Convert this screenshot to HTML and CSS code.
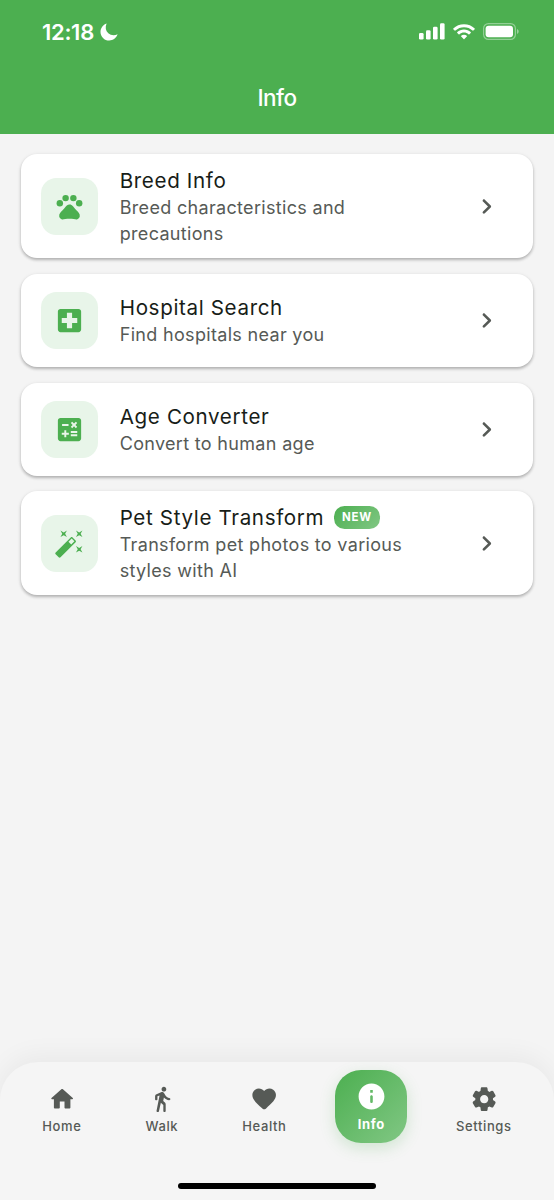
FILE: index.html
```html
<!DOCTYPE html>
<html lang="en">
<head>
<meta charset="utf-8">
<title>Info</title>
<link rel="stylesheet" href="styles.css">
</head>
<body>
<div class="screen">
  <header class="header">
    <div class="status">
      <div class="status-left">
        <span class="time">12:18</span>
        <svg class="moon" viewBox="0 0 18 18"><path d="M6.6.4C5 4.200 5.600 7.800 8.300 10.200c2.500 2.200 6 2.500 9.300 1.100C16.400 15 13.100 17.500 9.200 17.500 4.400 17.500.5 13.700.5 8.900.5 5 3 1.600 6.600.4z"/></svg>
      </div>
      <div class="status-right">
        <svg class="signal" viewBox="0 0 26 17"><rect x="0" y="10" width="4.600" height="6.500" rx="1.300"/><rect x="7" y="7.200" width="4.600" height="9.300" rx="1.300"/><rect x="14" y="3.800" width="4.600" height="12.700" rx="1.300"/><rect x="21" y="0.300" width="4.600" height="16.200" rx="1.300"/></svg>
        <svg class="wifi" viewBox="0 0 22 16"><path d="M11 .2C6.900.2 3.100 1.800.3 4.400c-.3.300-.3.600 0 .9l1.300 1.300c.2.200.6.200.9 0C4.800 4.500 7.700 3.300 11 3.300s6.200 1.200 8.500 3.300c.3.200.7.200.9 0l1.300-1.300c.3-.3.300-.6 0-.9C18.900 1.800 15.100.2 11 .2z"/><path d="M11 5.500c-2.600 0-4.900 1-6.700 2.600-.3.300-.3.600 0 .9l1.300 1.300c.3.300.6.300.9 0C7.700 9.200 9.300 8.600 11 8.600s3.300.6 4.500 1.700c.3.300.6.300.9 0L17.700 9c.3-.3.300-.6 0-.9-1.800-1.600-4.100-2.600-6.700-2.600z"/><path d="M11 10.700c-1.100 0-2.100.4-2.800 1-.3.300-.3.600 0 .9l2.400 2.500c.2.300.6.300.8 0l2.400-2.500c.3-.3.300-.6 0-.9-.7-.6-1.700-1-2.800-1z"/></svg>
        <svg class="battery" viewBox="0 0 36 17"><rect x=".6" y=".6" width="31.800" height="15.800" rx="4.800" fill="none" stroke="#fff" stroke-opacity=".4" stroke-width="1.200"/><rect x="2.600" y="2.700" width="27.400" height="11.600" rx="3"/><path d="M34 6v5c1-.4 1.700-1.400 1.700-2.500S35 6.400 34 6z" fill-opacity=".45"/></svg>
      </div>
    </div>
    <h1 class="title">Info</h1>
  </header>

  <main class="list">
    <a class="card tall">
      <span class="tile"><svg class="icon" viewBox="0 0 24 24"><circle cx="4.500" cy="9.500" r="2.500"/><circle cx="9" cy="5.500" r="2.500"/><circle cx="15" cy="5.500" r="2.500"/><circle cx="19.500" cy="9.500" r="2.500"/><path d="M17.34 14.86c-.87-1.02-1.6-1.89-2.48-2.91-.46-.54-1.05-1.08-1.75-1.32-.11-.04-.22-.07-.33-.09-.25-.04-.52-.04-.78-.04s-.53 0-.79.05c-.11.02-.22.05-.33.09-.7.24-1.28.78-1.75 1.32-.87 1.02-1.6 1.89-2.48 2.91-1.31 1.31-2.92 2.76-2.62 4.79.29 1.02 1.02 2.03 2.33 2.32.73.15 3.06-.44 5.54-.44h.18c2.48 0 4.81.58 5.54.44 1.31-.29 2.04-1.31 2.33-2.32.31-2.04-1.3-3.49-2.61-4.8z"/></svg></span>
      <span class="copy"><span class="name">Breed Info</span><span class="desc">Breed characteristics and precautions</span></span>
      <svg class="chevron" viewBox="0 0 24 24"><path d="M9.290 6.710c-.39.39-.39 1.020 0 1.410L13.170 12l-3.880 3.880c-.39.39-.39 1.020 0 1.410.39.39 1.020.39 1.410 0l4.590-4.590c.39-.39.39-1.020 0-1.410L10.700 6.700c-.38-.38-1.020-.38-1.410.01z"/></svg>
    </a>
    <a class="card">
      <span class="tile"><svg class="icon" viewBox="0 0 24 24"><path d="M19 3H5c-1.100 0-2 .9-2 2v14c0 1.100.9 2 2 2h14c1.100 0 2-.9 2-2V5c0-1.100-.9-2-2-2zm-1 11h-4v4h-4v-4H6v-4h4V6h4v4h4v4z"/></svg></span>
      <span class="copy"><span class="name">Hospital Search</span><span class="desc">Find hospitals near you</span></span>
      <svg class="chevron" viewBox="0 0 24 24"><path d="M9.290 6.710c-.39.39-.39 1.020 0 1.410L13.170 12l-3.880 3.880c-.39.39-.39 1.020 0 1.410.39.39 1.020.39 1.410 0l4.590-4.590c.39-.39.39-1.020 0-1.410L10.700 6.700c-.38-.38-1.020-.38-1.410.01z"/></svg>
    </a>
    <a class="card">
      <span class="tile"><svg class="icon" viewBox="0 0 24 24"><path d="M19 3H5c-1.100 0-2 .9-2 2v14c0 1.100.9 2 2 2h14c1.100 0 2-.9 2-2V5c0-1.100-.9-2-2-2zm-5.970 4.060L14.090 6l1.410 1.410L16.910 6l1.060 1.060-1.410 1.410 1.410 1.410-1.060 1.060-1.410-1.400-1.410 1.410-1.060-1.060 1.410-1.410-1.410-1.420zm-6.780.66h5v1.500h-5v-1.500zM11.500 16h-2v2H8v-2H6v-1.500h2v-2h1.500v2h2V16zm6.500 1.250h-5v-1.500h5v1.500zm0-2.500h-5v-1.500h5v1.500z"/></svg></span>
      <span class="copy"><span class="name">Age Converter</span><span class="desc">Convert to human age</span></span>
      <svg class="chevron" viewBox="0 0 24 24"><path d="M9.290 6.710c-.39.39-.39 1.020 0 1.410L13.170 12l-3.880 3.880c-.39.39-.39 1.020 0 1.410.39.39 1.020.39 1.410 0l4.590-4.590c.39-.39.39-1.020 0-1.410L10.700 6.700c-.38-.38-1.020-.38-1.410.01z"/></svg>
    </a>
    <a class="card tall">
      <span class="tile"><svg class="icon" viewBox="0 0 24 24"><path d="M7.500 5.600L10 7 8.600 4.500 10 2 7.500 3.400 5 2l1.400 2.500L5 7zm12 9.800L17 14l1.400 2.500L17 19l2.500-1.400L22 19l-1.400-2.500L22 14zM22 2l-2.500 1.400L17 2l1.400 2.500L17 7l2.500-1.400L22 7l-1.400-2.500zm-7.630 5.290c-.39-.39-1.020-.39-1.410 0L1.290 18.960c-.39.39-.39 1.020 0 1.410l2.340 2.340c.39.39 1.020.39 1.410 0L16.700 11.050c.39-.39.39-1.020 0-1.410l-2.330-2.350zm-1.030 5.490l-2.120-2.120 2.440-2.440 2.120 2.120-2.440 2.440z"/></svg></span>
      <span class="copy"><span class="name">Pet Style Transform<span class="badge">NEW</span></span><span class="desc">Transform pet photos to various styles with AI</span></span>
      <svg class="chevron" viewBox="0 0 24 24"><path d="M9.290 6.710c-.39.39-.39 1.020 0 1.410L13.170 12l-3.880 3.880c-.39.39-.39 1.020 0 1.410.39.39 1.020.39 1.410 0l4.590-4.590c.39-.39.39-1.020 0-1.410L10.700 6.700c-.38-.38-1.020-.38-1.410.01z"/></svg>
    </a>
  </main>

  <nav class="nav">
    <div class="tabs">
      <a class="tab"><svg viewBox="0 0 24 24"><path d="M10 19v-5h4v5c0 .55.45 1 1 1h3c.55 0 1-.45 1-1v-7h1.700c.46 0 .68-.57.33-.87L12.670 3.600c-.38-.34-.96-.34-1.340 0l-8.360 7.530c-.34.3-.13.87.33.87H5v7c0 .55.45 1 1 1h3c.55 0 1-.45 1-1z"/></svg><span>Home</span></a>
      <a class="tab"><svg viewBox="0 0 24 24"><path d="M13.500 5.500c1.100 0 2-.9 2-2s-.9-2-2-2-2 .9-2 2 .9 2 2 2zM9.800 8.900L7.240 21.810c-.13.61.35 1.190.98 1.190h.08c.47 0 .87-.32.98-.78L10.900 15l2.100 2v5c0 .55.45 1 1 1s1-.45 1-1v-5.640c0-.55-.22-1.070-.62-1.450L12.900 13.500l.6-3c1.070 1.240 2.620 2.130 4.360 2.410.6.09 1.140-.39 1.140-1 0-.49-.36-.9-.85-.98-1.520-.25-2.780-1.150-3.450-2.330l-1-1.600c-.56-.89-1.680-1.250-2.650-.84L7.220 7.780C6.480 8.100 6 8.820 6 9.630V12c0 .55.45 1 1 1s1-.45 1-1V9.600l1.800-.7"/></svg><span>Walk</span></a>
      <a class="tab"><svg viewBox="0 0 24 24"><path d="M13.350 20.130c-.76.69-1.930.69-2.690-.01l-.11-.1C5.300 15.270 1.870 12.160 2 8.280c.06-1.700.93-3.330 2.340-4.290 2.640-1.800 5.900-.96 7.660 1.100 1.760-2.060 5.020-2.910 7.660-1.100 1.410.96 2.280 2.590 2.340 4.290.14 3.880-3.300 6.990-8.550 11.760l-.1.09z"/></svg><span>Health</span></a>
      <a class="tab active"><svg viewBox="0 0 24 24"><path d="M12 2C6.480 2 2 6.480 2 12s4.480 10 10 10 10-4.480 10-10S17.520 2 12 2zm0 15c-.55 0-1-.45-1-1v-4c0-.55.45-1 1-1s1 .45 1 1v4c0 .55-.45 1-1 1zm1-8h-2V7h2v2z"/></svg><span>Info</span></a>
      <a class="tab"><svg viewBox="0 0 24 24"><path d="M19.500 12c0-.23-.01-.45-.03-.68l1.860-1.410c.4-.3.51-.86.26-1.300l-1.870-3.230c-.25-.44-.79-.62-1.250-.42l-2.150.91c-.37-.26-.76-.49-1.170-.68l-.29-2.310c-.06-.5-.49-.88-.99-.88h-3.730c-.51 0-.94.38-1 .88l-.29 2.310c-.41.19-.8.42-1.170.68l-2.150-.91c-.46-.2-1-.02-1.250.42L2.410 8.620c-.25.44-.14.99.26 1.300l1.860 1.410c-.02.22-.03.44-.03.67s.01.45.03.68l-1.860 1.410c-.4.3-.51.86-.26 1.300l1.870 3.230c.25.44.79.62 1.250.42l2.150-.91c.37.26.76.49 1.170.68l.29 2.310c.06.5.49.88.99.88h3.730c.5 0 .93-.38.99-.88l.29-2.310c.41-.19.8-.42 1.170-.68l2.150.91c.46.2 1 .02 1.250-.42l1.870-3.230c.25-.44.14-.99-.26-1.300l-1.860-1.410c.03-.23.04-.45.04-.68zm-7.460 3.500c-1.930 0-3.500-1.570-3.500-3.500s1.570-3.500 3.500-3.500 3.500 1.570 3.500 3.500-1.570 3.500-3.500 3.500z"/></svg><span>Settings</span></a>
    </div>
    <div class="home-indicator"></div>
  </nav>
</div>
</body>
</html>
```
FILE: styles.css
```css
* { box-sizing: border-box; }
body {
  margin: 0;
  font-family: Inter, "Liberation Sans", sans-serif;
  background: #f4f4f4;
}
.screen {
  display: flex;
  flex-direction: column;
  width: 554px;
  height: 1200px;
  overflow: hidden;
}
.header {
  height: 133.500px;
  flex: none;
  background: #4caf50;
  color: #fff;
}
.status {
  display: flex;
  justify-content: space-between;
  align-items: center;
  height: 63px;
  padding: 0 35px 0 42px;
}
.status svg { display: block; fill: #fff; }
.status-left { display: flex; align-items: center; gap: 6px; }
.status-right { display: flex; align-items: center; gap: 8px; }
.time { font-size: 22px; font-weight: 600; line-height: 28px; letter-spacing: -0.3px; }
.moon { width: 18px; height: 18px; }
.signal { width: 26px; height: 17px; }
.wifi { width: 22px; height: 16px; }
.battery { width: 36px; height: 17px; }
.title {
  margin: 0;
  line-height: 70px;
  text-align: center;
  font-size: 22.500px;
  font-weight: 500;
  letter-spacing: -0.5px;
}
.list {
  flex: 1;
  display: flex;
  flex-direction: column;
  gap: 15.700px;
  padding: 20.700px 20.600px 0;
}
.card {
  display: flex;
  align-items: center;
  flex: none;
  height: 93px;
  padding: 0 31px 0 20.600px;
  border-radius: 16px;
  background: #fff;
  box-shadow: 0 2px 3px rgba(0, 0, 0, .22), 0 1px 4px rgba(0, 0, 0, .1);
}
.card.tall { height: 104px; }
.tile {
  display: flex;
  align-items: center;
  justify-content: center;
  width: 57px;
  height: 57px;
  margin-right: 21.500px;
  border-radius: 15.500px;
  background: #e8f5e9;
}
.icon { width: 31px; height: 31px; fill: #4caf50; }
.copy { display: flex; flex-direction: column; width: 310px; }
.name {
  display: flex;
  align-items: center;
  height: 30px;
  white-space: nowrap;
  font-size: 20.600px;
  letter-spacing: 0.640px;
  color: #181d18;
}
.desc {
  font-size: 18px;
  line-height: 25.800px;
  letter-spacing: 0.320px;
  color: #565a56;
}
.badge {
  margin-left: 10px;
  width: 45.500px;
  height: 23.500px;
  border-radius: 10.500px;
  background: linear-gradient(135deg, #4caf50, #81c784);
  color: #fff;
  font-size: 11.500px;
  font-weight: 700;
  line-height: 23.500px;
  text-align: center;
  letter-spacing: 0.700px;
}
.chevron { width: 31px; height: 31px; margin-left: auto; fill: #565a56; }
.nav {
  flex: none;
  height: 138px;
  border-radius: 38px 38px 0 0;
  background: #f5f5f5;
  box-shadow: 0 -6px 26px rgba(0, 0, 0, .05);
}
.tabs {
  display: flex;
  justify-content: space-around;
  height: 89px;
  padding: 8px 10.300px 0;
}
.tab {
  display: flex;
  flex-direction: column;
  align-items: center;
  padding: 14.500px 15.500px 0;
  font-size: 13px;
  font-weight: 500;
  line-height: 16px;
  letter-spacing: 0.640px;
  color: #565a56;
}
.tab svg { width: 28.300px; height: 28.300px; margin-bottom: 5.500px; fill: currentColor; }
.tab.active {
  width: 72.500px;
  height: 73px;
  padding: 10.500px 0 0;
  border-radius: 26px;
  background: linear-gradient(135deg, #4caf50, #81c784);
  box-shadow: 0 5px 15px rgba(76, 175, 80, .22);
  font-weight: 700;
  color: #fff;
}
.tab.active svg { width: 31px; height: 31px; margin-bottom: 4.500px; }
.home-indicator {
  width: 198px;
  height: 6.500px;
  margin: 31.500px auto 0;
  border-radius: 4px;
  background: #000;
}
```
